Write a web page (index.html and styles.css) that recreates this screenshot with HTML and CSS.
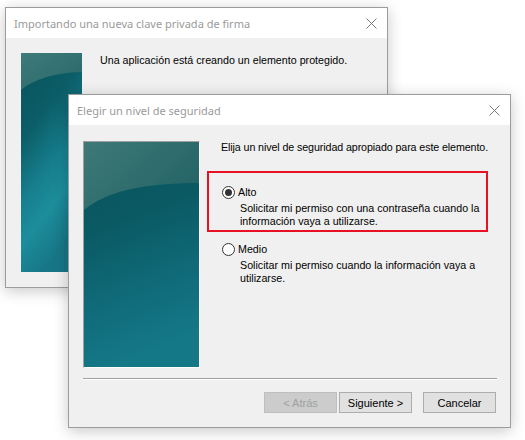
FILE: index.html
```html
<!DOCTYPE html>
<html lang="es">
<head>
<meta charset="utf-8">
<title>Elegir un nivel de seguridad</title>
<link rel="stylesheet" href="styles.css">
</head>
<body>
<div class="desktop">

  <section class="window window-back">
    <header class="titlebar">
      <span class="title">Importando una nueva clave privada de firma</span>
      <span class="close" aria-label="Cerrar">
        <svg width="11" height="11" viewBox="0 0 11 11"><path d="M0.5 0.5 L10.5 10.5 M10.5 0.5 L0.5 10.5" stroke="#7a7a7a" stroke-width="1" fill="none"/></svg>
      </span>
    </header>
    <div class="body back-body">
      <div class="art art-small">
        <svg width="61" height="219" viewBox="0 0 61 219" preserveAspectRatio="none">
          <defs>
            <linearGradient id="bgSmall" x1="0" y1="0" x2="0.35" y2="1">
              <stop offset="0" stop-color="#08525c"/>
              <stop offset="0.35" stop-color="#0b5d67"/>
              <stop offset="0.62" stop-color="#17808f"/>
              <stop offset="0.78" stop-color="#1c8d9c"/>
              <stop offset="1" stop-color="#177686"/>
            </linearGradient>
            <linearGradient id="topSmall" x1="0" y1="0" x2="1" y2="1">
              <stop offset="0" stop-color="#3f7a79"/>
              <stop offset="1" stop-color="#27686b"/>
            </linearGradient>
          </defs>
          <rect width="61" height="219" fill="url(#bgSmall)"/>
          <path d="M0 37 C14 26 32 20 61 19 V0 H0 Z" fill="url(#topSmall)"/>
        </svg>
      </div>
      <p class="back-text">Una aplicación está creando un elemento protegido.</p>
    </div>
  </section>

  <section class="window window-front">
    <header class="titlebar">
      <span class="title">Elegir un nivel de seguridad</span>
      <span class="close" aria-label="Cerrar">
        <svg width="11" height="11" viewBox="0 0 11 11"><path d="M0.5 0.5 L10.5 10.5 M10.5 0.5 L0.5 10.5" stroke="#7a7a7a" stroke-width="1" fill="none"/></svg>
      </span>
    </header>
    <div class="body front-body">
      <div class="content">
        <div class="art art-large">
          <svg width="116" height="226" viewBox="0 0 116 226" preserveAspectRatio="none">
            <defs>
              <linearGradient id="bgLarge" x1="0" y1="0" x2="0.2" y2="1">
                <stop offset="0" stop-color="#07515b"/>
                <stop offset="0.4" stop-color="#0a5a64"/>
                <stop offset="0.75" stop-color="#106c7a"/>
                <stop offset="1" stop-color="#157887"/>
              </linearGradient>
              <linearGradient id="topLarge" x1="0" y1="0" x2="1" y2="0.6">
                <stop offset="0" stop-color="#3e7977"/>
                <stop offset="1" stop-color="#256567"/>
              </linearGradient>
            </defs>
            <rect width="116" height="226" fill="url(#bgLarge)"/>
            <path d="M0 68 C22 50 58 41 116 41 V0 H0 Z" fill="url(#topLarge)"/>
          </svg>
        </div>
        <div class="options">
          <p class="intro">Elija un nivel de seguridad apropiado para este elemento.</p>
          <div class="option option-selected">
            <label class="radio-row">
              <span class="radio checked"></span>
              <span>Alto</span>
            </label>
            <p class="desc">Solicitar mi permiso con una contraseña cuando la<br>información vaya a utilizarse.</p>
          </div>
          <div class="option option-plain">
            <label class="radio-row">
              <span class="radio"></span>
              <span>Medio</span>
            </label>
            <p class="desc">Solicitar mi permiso cuando la información vaya a<br>utilizarse.</p>
          </div>
        </div>
      </div>
      <hr class="separator">
      <div class="buttons">
        <button class="btn" disabled>&lt; Atrás</button>
        <button class="btn">Siguiente &gt;</button>
        <button class="btn btn-cancel">Cancelar</button>
      </div>
    </div>
  </section>

</div>
</body>
</html>
```
FILE: styles.css
```css
* {
  box-sizing: border-box;
}

html, body {
  margin: 0;
  padding: 0;
  background: #ffffff;
}

.desktop {
  position: relative;
  width: 525px;
  height: 440px;
  overflow: hidden;
  font-family: "Liberation Sans", Arial, sans-serif;
  font-size: 10.7px;
  color: #000;
}

/* Dialog windows sit on a free desktop canvas */
.window {
  position: absolute;
  display: flex;
  flex-direction: column;
  background: #f0f0f0;
  border: 1px solid #9c9c9c;
  box-shadow: 0 3px 14px rgba(0, 0, 0, 0.22);
}

.window-back {
  left: 5px;
  top: 7px;
  width: 383px;
  height: 281px;
}

.window-front {
  left: 68px;
  top: 94px;
  width: 443px;
  height: 334px;
}

.titlebar {
  flex: 0 0 30px;
  display: flex;
  align-items: center;
  justify-content: space-between;
  background: #ffffff;
  padding: 0 10px 0 8px;
}

.title {
  font-family: "Noto Sans", "Open Sans", sans-serif;
  font-size: 11px;
  color: #9a9a9a;
}

.close {
  display: flex;
  width: 11px;
  height: 11px;
}

.body {
  flex: 1;
}

/* Back dialog */
.back-body {
  display: flex;
  padding: 15px 0 0 15px;
  gap: 18px;
}

.art {
  display: flex;
}

.art svg {
  display: block;
}

.art-small {
  width: 61px;
  height: 219px;
}

.back-text {
  margin: 1px 0 0;
  line-height: 13px;
  white-space: nowrap;
}

/* Front dialog */
.front-body {
  display: flex;
  flex-direction: column;
  padding: 16px 13px 0 14px;
}

.content {
  display: flex;
  gap: 7px;
}

.art-large {
  width: 117px;
  height: 227px;
  border-style: solid;
  border-width: 1px;
  border-color: #a0a0a0 #ffffff #ffffff #a0a0a0;
  overflow: hidden;
}

.options {
  display: flex;
  flex-direction: column;
  width: 281px;
}

.intro {
  margin: 0 0 0 14px;
  line-height: 13px;
  white-space: nowrap;
  letter-spacing: -0.1px;
}

.option {
  display: flex;
  flex-direction: column;
}

.option-selected {
  margin-top: 17px;
  border: 2px solid #e81123;
  padding: 13px 4px 3px 13px;
  height: 61px;
}

.option-plain {
  margin-top: 11px;
  padding-left: 15px;
}

.radio-row {
  display: flex;
  align-items: center;
  gap: 3px;
  line-height: 13px;
}

.radio {
  width: 13px;
  height: 13px;
  border: 1px solid #333333;
  border-radius: 50%;
  background: #ffffff;
  display: flex;
  align-items: center;
  justify-content: center;
}

.radio.checked::after {
  content: "";
  width: 7px;
  height: 7px;
  border-radius: 50%;
  background: #333333;
}

.desc {
  margin: 3px 0 0 18px;
  line-height: 13px;
  white-space: nowrap;
}

.separator {
  margin: 10px 0 0 0;
  border: 0;
  border-top: 1px solid #a0a0a0;
  border-bottom: 1px solid #ffffff;
  height: 2px;
  width: 414px;
}

.buttons {
  display: flex;
  justify-content: flex-end;
  gap: 2px;
  margin-top: 12px;
  padding-right: 1px;
}

.btn {
  width: 73px;
  height: 21px;
  padding: 0;
  font-family: "Liberation Sans", Arial, sans-serif;
  font-size: 11px;
  color: #000;
  background: #e1e1e1;
  border: 1px solid #adadad;
  border-radius: 0;
}

.btn:disabled {
  background: #cccccc;
  border-color: #bfbfbf;
  color: #9f9f9f;
}

.btn-cancel {
  margin-left: 9px;
}
```
